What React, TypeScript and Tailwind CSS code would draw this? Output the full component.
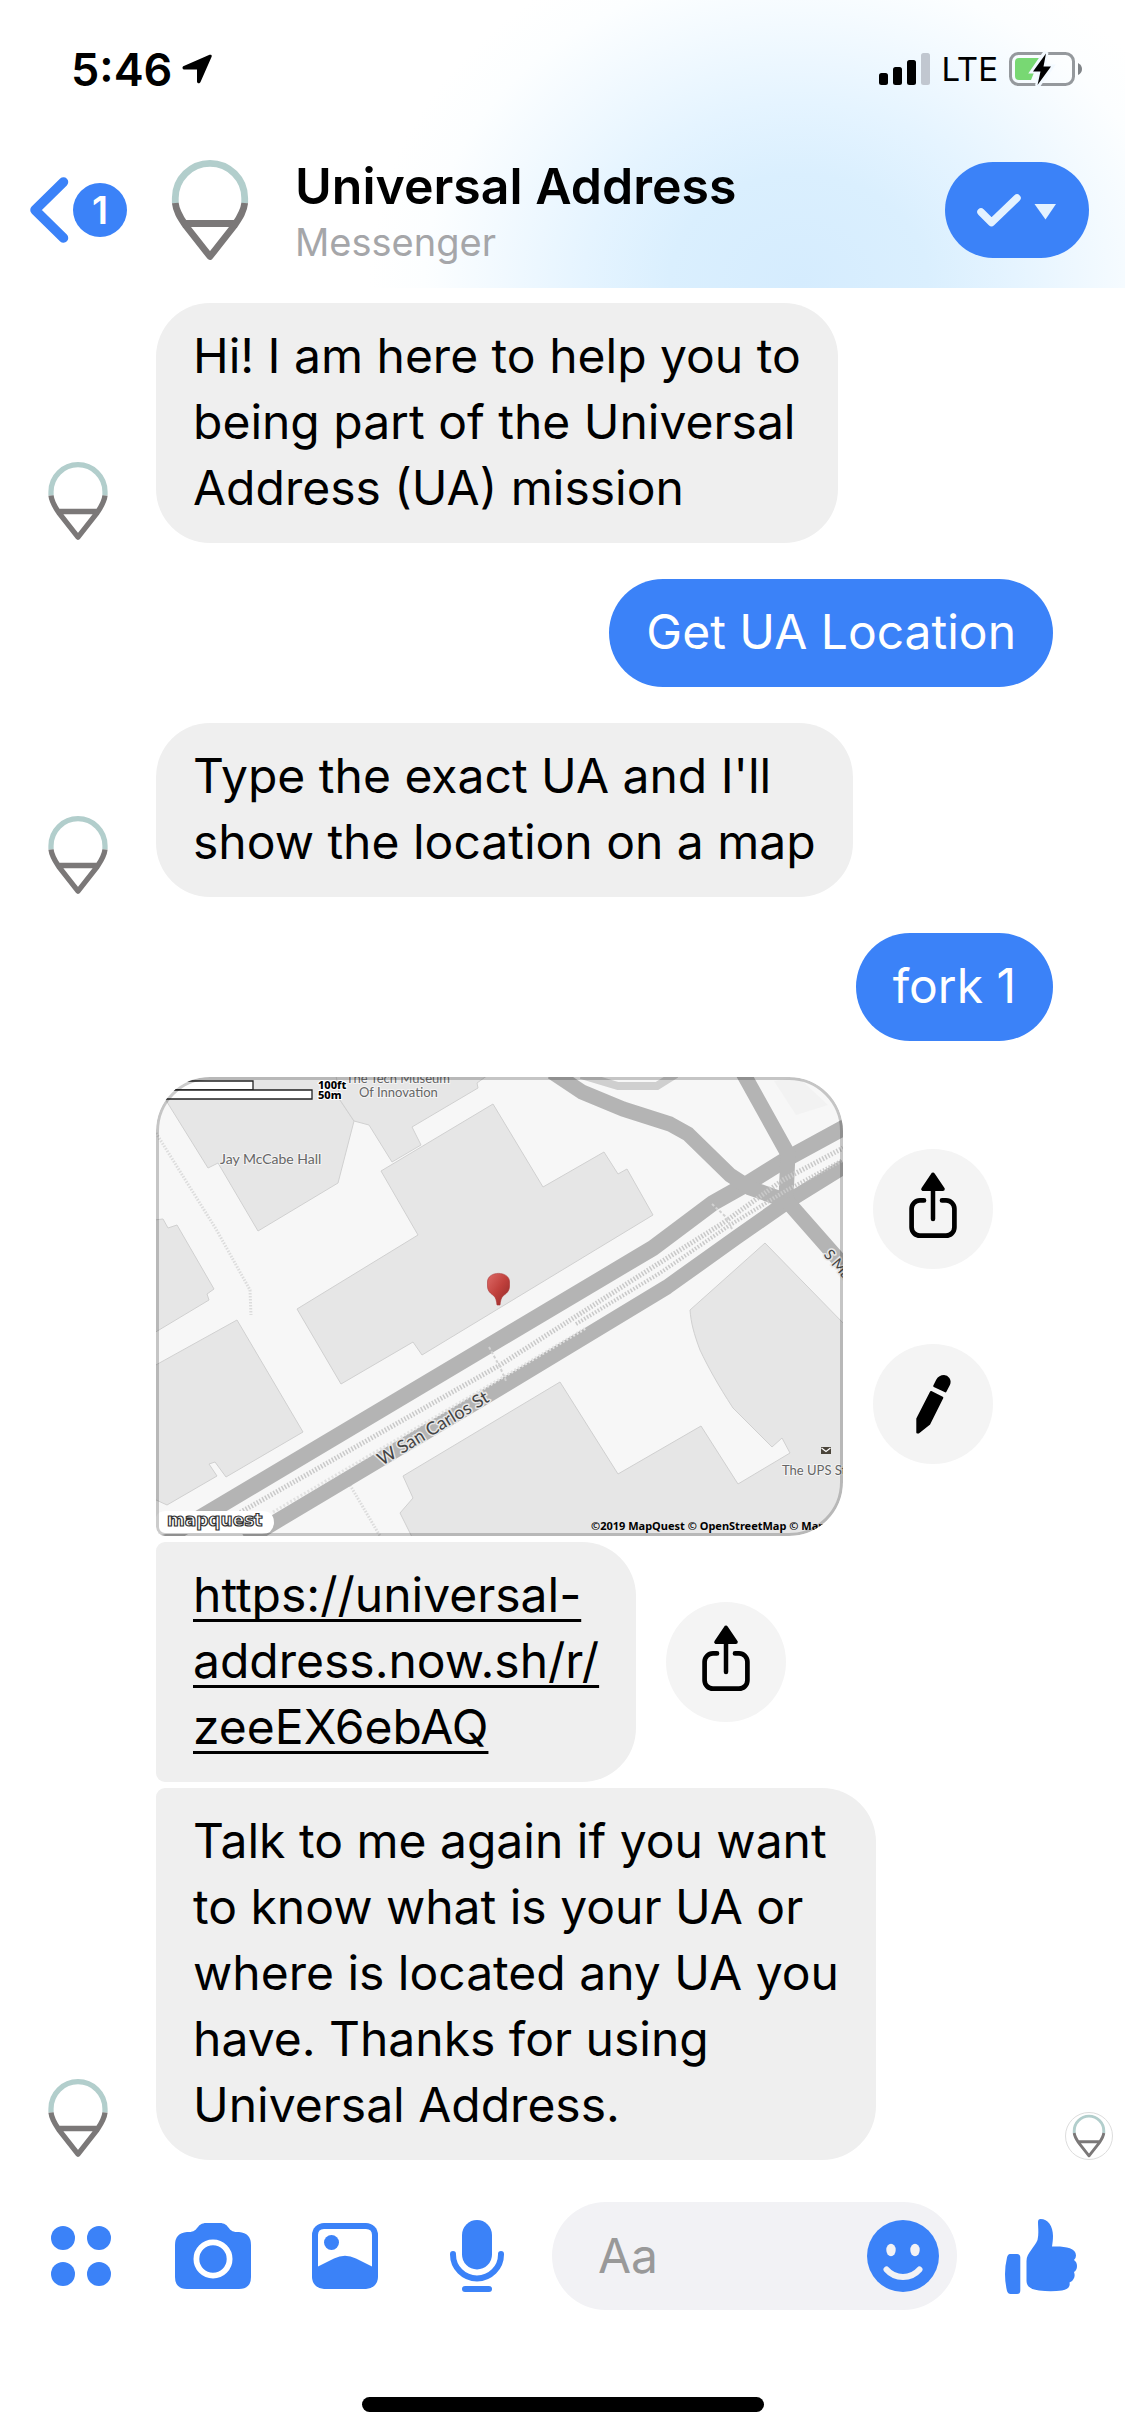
import type { ReactNode } from "react";

const BLUE = "#3b82f8";

function Logo({ className }: { className: string }) {
  return (
    <svg viewBox="0 0 108 108" className={className} fill="none" strokeWidth="6.8" role="img" aria-label="Universal Address logo">
      <path d="M19.3 47V42A34.7 34.7 0 0 1 88.7 42V47" stroke="#b2cecc" />
      <path d="M19.3 47C20.2 56 25 62.500 30 70L54 100.500L78 70C83 62.500 87.800 56 88.700 47M29 67.500H79" stroke="#7b7878" strokeLinejoin="round" />
    </svg>
  );
}

function ShareButton({ label }: { label: string }) {
  return (
    <button type="button" aria-label={label} className="size-[120px] shrink-0 rounded-full bg-[#f4f4f4]">
      <svg viewBox="0 0 120 120" className="size-full" fill="none" stroke="#000" strokeLinecap="round" strokeLinejoin="round">
        <path strokeWidth="4.700" d="M51 51.400H47A8.400 8.400 0 0 0 38.600 59.800V78.300A8.400 8.400 0 0 0 47 86.700H73A8.400 8.400 0 0 0 81.400 78.300V59.800A8.400 8.400 0 0 0 73 51.400H69" />
        <path strokeWidth="4.500" d="M60 40V70" />
        <path strokeWidth="4" fill="#000" d="M60 25.500L50.200 40H69.800Z" />
      </svg>
    </button>
  );
}

function EditButton() {
  return (
    <button type="button" aria-label="Edit image" className="size-[120px] shrink-0 rounded-full bg-[#f4f4f4]">
      <svg viewBox="0 0 120 120" className="size-full" fill="#000" stroke="#000" strokeWidth="2" strokeLinejoin="round">
        <path d="M58 48L69.300 53.700L56.200 80L45.500 88.500H44.300V74.700Z" />
        <path d="M61.200 42L72.500 47.400L76 40.600C78 36 74.500 32 71 32C67.500 32 65.500 33.700 64.200 36Z" />
      </svg>
    </button>
  );
}

function MapCard() {
  return (
    <div className="relative h-[459px] w-[687px] overflow-hidden rounded-[54px] rounded-bl-[9px] bg-[#f7f7f7]">
      <svg viewBox="0 0 687 459" className="size-full" fill="none" role="img" aria-label="Map of W San Carlos St">
        <g fill="#e6e6e6" stroke="#d0d0d0" strokeWidth="1">
          <path d="M4 -2L11 25L52 91L62 86L102 154L182 106L198 44L184 23L180 -2Z" />
          <path d="M180 -2L184 23L198 44L213 48L236 85L265 68L256 50L322 11L321 6L332 -2Z" />
          <path d="M225 94L337 27L387 110L448 75L462 97L471 92L497 138L266 278L257 265L185 307L141 232L262 158Z" />
          <path d="M-2 143L7 142L12 151L21 148L58 212L51 217L53 223L-2 256Z" />
          <path d="M-2 289L81 243L147 355L70 400L59 385L53 387L61 399L11 428L-2 422Z" />
          <path d="M257 462L244 436L257 421L247 399L404 305L462 397L545 349L582 407L634 376L626 361L616 370L577 331C562 308 552 290 544 273C538 257 535 246 534 233L609 166L690 249V462Z" />
        </g>
        <path d="M618 4L642 0L672 28L640 38Z" fill="#f2f2f2" />
        <g stroke="#dcdcdc" strokeWidth="3" strokeDasharray="1.500 1.500">
          <path d="M0 56L60 152L94 213L95 238" />
          <path d="M191 403L224 459" />
        </g>
        <path d="M425 -2L462 9H501L520 -3" stroke="#cfcfcf" strokeWidth="8" />
        <g stroke="#b4b4b4" strokeWidth="15" strokeLinejoin="round">
          <path d="M-2 468L344 262L497 171L557 126L589 108L634 80L689 50" strokeWidth="16" />
          <path d="M90 463L111 450L344 311L511 210L581 160L631 125L689 89" />
          <path d="M396 -5L426 15L467 32L514 47L532 57L574 98L594 111L631 124L689 190" />
          <path d="M587 -4L632 77L630 120" />
        </g>
        <g stroke="#c9c9c9" strokeWidth="5" strokeDasharray="1.500 1.700">
          <path d="M62 448L344 288L497 190L567 146L627 103L687 71" />
          <path d="M420 247L504 196L574 148L631 113L687 83" strokeWidth="4" />
        </g>
        <path d="M117 435L344 302L430 251" stroke="#e2e2e2" strokeWidth="3" strokeDasharray="2 2" />
        <path d="M333 270L344 290L350 304M556 127L570 140L576 152" stroke="#d2d2d2" strokeWidth="2" strokeDasharray="3 2" />

        <defs>
          <linearGradient id="pin" x1="0" y1="0" x2="1" y2="1">
            <stop offset="0" stopColor="#dd6a66" />
            <stop offset=".5" stopColor="#c0403c" />
            <stop offset="1" stopColor="#8f2a29" />
          </linearGradient>
        </defs>
        <path d="M331.500 205C331.500 193.500 353.500 193.500 353.500 205V209C353.500 214.500 350 216.500 347 219C345 221 344.500 224 344 228H341C340.500 224 340 221 338 219C335 216.500 331.500 214.500 331.500 209Z" fill="url(#pin)" stroke="#a33" strokeWidth=".6" />

        <g fontFamily="Lato, sans-serif" fill="#666" stroke="#f4f4f4" strokeWidth="2" paintOrder="stroke">
          <text x="64" y="87" fontSize="14">Jay McCabe Hall</text>
          <text x="190" y="6" fontSize="13">The Tech Museum</text>
          <text x="203" y="20" fontSize="13">Of Innovation</text>
          <text x="626" y="398" fontSize="13">The UPS Store</text>
        </g>
        <g fontFamily="Lato, sans-serif" fill="#444" stroke="#e8e8e8" strokeWidth="3" paintOrder="stroke" fontSize="18">
          <text transform="translate(226 389) rotate(-31)">W San Carlos St</text>
          <text transform="translate(667 178) rotate(49)" fontSize="15">S Market St</text>
        </g>

        <path d="M665 370H675V377H665Z" fill="#4a443a" />
        <path d="M665.500 371L670 374.500L674.500 371" stroke="#fff" strokeWidth="1.200" />

        <g fill="#fff" stroke="#222" strokeWidth="1.300">
          <path d="M-5 4H97V13H-5Z" />
          <path d="M-5 13H156V22H-5Z" />
        </g>
        <g fontFamily="'Noto Sans', sans-serif" fontWeight="800" fontSize="11" fill="#000" stroke="#fff" strokeWidth="2" paintOrder="stroke">
          <text x="162" y="12">100ft</text>
          <text x="162" y="22">50m</text>
          <text x="435" y="453" fontWeight="700" strokeWidth="0">©2019 MapQuest © OpenStreetMap © Mapbox</text>
        </g>

        <path d="M0 459V440Q2 434 10 434H106Q118 434 118 446Q117 457 106 457H10Z" fill="#fff" />
        <text x="11" y="449" fontFamily="'DejaVu Sans', sans-serif" fontSize="17" fontWeight="700" fill="#fff" stroke="#333" strokeWidth="1.200">mapquest</text>
      </svg>
      <div className="pointer-events-none absolute inset-0 rounded-[54px] rounded-bl-[9px] border-[3px] border-black/20" />
    </div>
  );
}

function Bubble({ children, mine = false, grouped = false, last = false }: { children: ReactNode; mine?: boolean; grouped?: boolean; last?: boolean }) {
  const tone = mine ? "bg-[#3b82f8] text-white" : "bg-[#efefef] text-black";
  const corner = grouped ? (last ? "rounded-tl-[9px]" : "rounded-l-[9px]") : "";
  return (
    <div className={`w-fit whitespace-pre-line rounded-[54px] px-[37px] pt-5 pb-[22px] text-[48px] leading-[66px] ${tone} ${corner}`}>
      {children}
    </div>
  );
}

function Incoming({ children }: { children: ReactNode }) {
  return (
    <div className="flex items-end gap-9 pl-9">
      <Logo className="size-[84px] shrink-0" />
      {children}
    </div>
  );
}

function StatusBar() {
  return (
    <div className="flex h-[138px] items-center justify-between pr-[43px] pl-[71px]">
      <div className="flex items-center gap-[10px]">
        <span className="text-[45px] leading-none font-semibold">5:46</span>
        <svg viewBox="0 0 30 30" className="size-[30px]" aria-label="Location in use">
          <path d="M29 .8C30 1.200 29.800 2.200 29.500 3L18.500 28C17.700 30 15 29.600 15 27.500V15.500H2.500C.3 15.500 -.3 12.800 1.800 12L27 1C27.800 .6 28.400 .5 29 .8Z" />
        </svg>
      </div>
      <div className="flex items-center gap-[11px]">
        <svg viewBox="0 0 51 32" className="h-8 w-[51px]" aria-label="Signal strength">
          <rect x="0" y="20" width="9" height="12" rx="2.500" />
          <rect x="14" y="14" width="9" height="18" rx="2.500" />
          <rect x="28" y="7" width="9" height="25" rx="2.500" />
          <rect x="42" y="0" width="9" height="32" rx="2.500" fill="#c1c7d0" />
        </svg>
        <span className="text-[33px] leading-none">LTE</span>
        <svg viewBox="0 0 73 36" className="h-9 w-[73px]" aria-label="Battery charging">
          <rect x="1.500" y="2.500" width="63" height="31" rx="8" fill="none" stroke="#95999d" strokeWidth="3" />
          <path d="M10 7H31L22 29H10Q6 29 6 25V11Q6 7 10 7Z" fill="#78d873" />
          <path d="M69 12Q73 14 73 18T69 24Z" fill="#808488" />
          <path d="M37 1L24 20H31.500L28.500 35L42 16H34.500Z" stroke="#f2f9ff" strokeWidth="5" />
          <path d="M37 2.500L24 20.500H31.500L28.500 34L42 15.500H34.500Z" />
        </svg>
      </div>
    </div>
  );
}

function Header() {
  return (
    <header className="bg-[radial-gradient(430px_360px_at_71%_98%,#d5ecfe_0%,#daeffe_30%,#e5f4ff_50%,#f3faff_72%,#fcfeff_87%,#ffffff_100%)] pb-1.5">
      <StatusBar />
      <div className="flex h-36 items-center pr-9 pl-[30px]">
        <button type="button" aria-label="Back, 1 unread" className="flex shrink-0 items-center gap-1">
          <svg viewBox="0 0 39 66" className="h-[66px] w-[39px]" fill="none" stroke={BLUE} strokeWidth="9.500" strokeLinecap="round" strokeLinejoin="round">
            <path d="M33.500 5L5 33L33.500 61" />
          </svg>
          <span className="flex size-[54px] items-center justify-center rounded-full bg-[#3b82f8] text-[38px] leading-none font-semibold text-white">1</span>
        </button>
        <Logo className="ml-[29px] size-[108px] shrink-0" />
        <div className="ml-[31px] flex-1 pt-1">
          <h1 className="text-[50px] leading-[60px] font-semibold">Universal Address</h1>
          <p className="text-[38px] leading-[52px] text-[#a5a6a9]">Messenger</p>
        </div>
        <button type="button" aria-label="Conversation options" className="h-24 w-36 shrink-0 rounded-full bg-[#3b82f8]">
          <svg viewBox="0 0 144 96" className="size-full" fill="none">
            <path d="M36 50L46.500 60.500L72 36" stroke="#e4f2ff" strokeWidth="7.500" strokeLinecap="round" strokeLinejoin="round" />
            <path d="M89.500 42H111L100.500 57.500Z" fill="#e4f2ff" />
          </svg>
        </button>
      </div>
    </header>
  );
}

function ToolButton({ label, children }: { label: string; children: ReactNode }) {
  return (
    <button type="button" aria-label={label} className="flex h-[108px] w-[132px] shrink-0 items-center justify-center text-[#3b82f8]">
      {children}
    </button>
  );
}

function Composer() {
  return (
    <footer className="mt-[42px] flex items-center pr-[18px] pl-[15px]">
      <ToolButton label="More">
        <svg viewBox="0 0 60 60" className="size-[60px]" fill="currentColor">
          <circle cx="12" cy="12" r="12" />
          <circle cx="48" cy="12" r="12" />
          <circle cx="12" cy="48" r="12" />
          <circle cx="48" cy="48" r="12" />
        </svg>
      </ToolButton>
      <ToolButton label="Camera">
        <svg viewBox="0 0 76 66" className="h-[66px] w-[76px]" fill="currentColor">
          <path d="M12 9H14C24 9 21 0 31.500 0H44.500C55 0 52 9 62 9H64Q76 10 76 22V54Q76 66 64 66H12Q0 66 0 54V22Q0 10 12 9Z" />
          <circle cx="38" cy="36" r="16.600" fill="none" stroke="#fff" strokeWidth="5.800" />
        </svg>
      </ToolButton>
      <ToolButton label="Photos">
        <svg viewBox="0 0 66 66" className="size-[66px]" fill="currentColor">
          <rect width="66" height="66" rx="12" />
          <path d="M12 6H54Q60 6 60 12V43.500L44 35.500Q33 30 22 35.500L6 43.500V12Q6 6 12 6Z" fill="#fff" />
          <circle cx="19.500" cy="19.500" r="7.500" />
        </svg>
      </ToolButton>
      <ToolButton label="Voice message">
        <svg viewBox="0 0 54 72" className="h-[72px] w-[54px]" fill="currentColor">
          <rect x="12" y="0" width="30" height="49.500" rx="15" />
          <path d="M3 34V34.500A24 24 0 0 0 51 34.500V34" fill="none" stroke="currentColor" strokeWidth="6" strokeLinecap="round" />
          <rect x="12" y="66" width="30" height="6" rx="3" />
        </svg>
      </ToolButton>
      <div className="ml-[9px] flex h-[108px] min-w-0 flex-1 items-center rounded-full bg-[#f2f2f5] pr-[18px] pl-[46px]">
        <input aria-label="Message" placeholder="Aa" className="min-w-0 flex-1 bg-transparent text-[48px] outline-none placeholder:text-[#999]" />
        <button type="button" aria-label="Emoji" className="size-[72px] shrink-0">
          <svg viewBox="0 0 72 72" className="size-full">
            <circle cx="36" cy="36" r="36" fill={BLUE} />
            <ellipse cx="24" cy="30" rx="4.700" ry="6.200" fill="#f2f2f5" />
            <ellipse cx="48" cy="30" rx="4.700" ry="6.200" fill="#f2f2f5" />
            <path d="M19.500 49.500Q26 57 36 57T52.500 49.500" fill="none" stroke="#f2f2f5" strokeWidth="6" strokeLinecap="round" />
          </svg>
        </button>
      </div>
      <div className="ml-[18px]">
        <ToolButton label="Like">
          <svg viewBox="0 0 72 75" className="h-[75px] w-[72px]" fill="currentColor">
            <path d="M5 35H12Q15.300 35 15.300 38.500V71.500Q15.300 75 12 75H5.500Q3 75 2 72Q-2 55 2 38.500Q2.800 35 5 35Z" />
            <path d="M35.500 0C43 0 48 7 48 17C48 21 47.500 24 47 27.500C58 27 71 28 71 36.500Q71 39 69 41Q72 43 72 47Q72 51 69 53Q70.500 57 68.500 60Q67.500 62.500 64.500 63.500Q66 70 57 71.500Q46 73 34 71.500Q21.500 70 21.500 62V42C21.500 34 30 28 32.500 21C34 15 33 8 33 3Q33 0 35.500 0Z" />
          </svg>
        </ToolButton>
      </div>
    </footer>
  );
}

export default function App() {
  return (
    <div className="flex min-h-screen flex-col bg-white font-['Inter',sans-serif] text-black">
      <Header />
      <main className="flex flex-col gap-9 pt-[15px]">
        <Incoming>
          <Bubble>{"Hi! I am here to help you to\nbeing part of the Universal\nAddress (UA) mission"}</Bubble>
        </Incoming>
        <div className="flex justify-end pr-[72px]">
          <Bubble mine>Get UA Location</Bubble>
        </div>
        <Incoming>
          <Bubble>{"Type the exact UA and I'll\nshow the location on a map"}</Bubble>
        </Incoming>
        <div className="flex justify-end pr-[72px]">
          <Bubble mine>fork 1</Bubble>
        </div>
        <div className="flex items-end">
          <div className="min-w-0 flex-1">
            <Incoming>
              <div className="flex flex-col gap-1.5">
                <div className="flex items-center gap-[30px]">
                  <MapCard />
                  <div className="flex flex-col gap-[75px]">
                    <ShareButton label="Share map" />
                    <EditButton />
                  </div>
                </div>
                <div className="flex items-center gap-[30px]">
                  <Bubble grouped>
                    <a href="https://universal-address.now.sh/r/zeeEX6ebAQ" className="underline decoration-[3px] underline-offset-[7px] [text-decoration-skip-ink:none]">
                      {"https://universal-\naddress.now.sh/r/\nzeeEX6ebAQ"}
                    </a>
                  </Bubble>
                  <ShareButton label="Share link" />
                </div>
                <Bubble grouped last>
                  {"Talk to me again if you want\nto know what is your UA or\nwhere is located any UA you\nhave. Thanks for using\nUniversal Address."}
                </Bubble>
              </div>
            </Incoming>
          </div>
          <div className="mr-3 size-12 shrink-0 overflow-hidden rounded-full border border-[#ddd]" title="Seen">
            <Logo className="size-full" />
          </div>
        </div>
      </main>
      <Composer />
      <div className="mx-auto mt-auto mb-6 h-[15px] w-[402px] rounded-full bg-black" />
    </div>
  );
}
